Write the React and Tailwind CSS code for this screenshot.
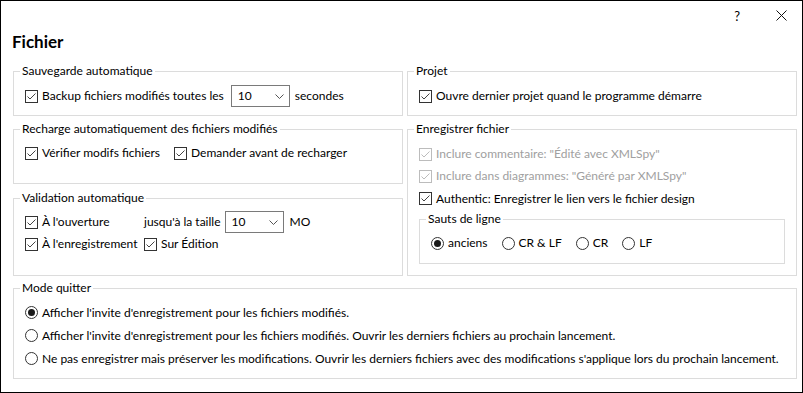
import React from "react";

const Check = ({ disabled = false }) => (
  <span
    className={`flex h-[13px] w-[13px] shrink-0 items-center justify-center border bg-white ${
      disabled ? "border-[#bcbcbc]" : "border-[#333333]"
    }`}
  >
    <svg width="11" height="11" viewBox="0 0 11 11">
      <path
        d="M1.5 5.5 L4 8 L9.5 2.5"
        fill="none"
        stroke={disabled ? "#bcbcbc" : "#444444"}
        strokeWidth="1"
      />
    </svg>
  </span>
);

const Radio = ({ checked = false }) => (
  <span className="flex h-[13px] w-[13px] shrink-0 items-center justify-center rounded-full border border-[#333333] bg-white">
    {checked && <span className="h-[7px] w-[7px] rounded-full bg-[#1a1a1a]" />}
  </span>
);

const CheckLabel = ({ children, disabled }) => (
  <label className="flex items-center gap-[4px]">
    <Check disabled={disabled} />
    <span className={disabled ? "text-[#a0a0a0]" : ""}>{children}</span>
  </label>
);

const RadioLabel = ({ children, checked }) => (
  <label className="flex items-center gap-[4px]">
    <Radio checked={checked} />
    <span>{children}</span>
  </label>
);

const Combo = ({ value }) => (
  <div className="flex h-[22px] w-[59px] shrink-0 items-center justify-between border border-[#7a7a7a] bg-white pl-[6px] pr-[5px]">
    <span>{value}</span>
    <svg width="9" height="5" viewBox="0 0 9 5">
      <path d="M0.5 0.5 L4.5 4.5 L8.5 0.5" fill="none" stroke="#555555" strokeWidth="1" />
    </svg>
  </div>
);

const Group = ({ title, className = "", children }) => (
  <fieldset className={`border border-[#dcdcdc] ${className}`}>
    <legend className="ml-[6px] px-[2px] leading-[16px]">{title}</legend>
    {children}
  </fieldset>
);

const App = () => {
  return (
    <div className="flex h-[393px] w-[803px] flex-col border border-black bg-white text-[12px] leading-[16px] text-black font-['Lato',sans-serif]">
      <div className="flex h-[29px] items-center justify-end pr-[15px]">
        <span className="mr-[36px] text-[13px]">?</span>
        <svg width="11" height="11" viewBox="0 0 11 11">
          <path d="M0.5 0.5 L10.5 10.5 M10.5 0.5 L0.5 10.5" stroke="#111111" strokeWidth="1" />
        </svg>
      </div>

      <h1 className="ml-[11px] h-[33px] text-[17px] font-bold leading-[24px]">Fichier</h1>

      <div className="grid grid-cols-[390px_390px] gap-x-[4px] pl-[12px]">
        <div className="flex flex-col">
          <Group title="Sauvegarde automatique" className="h-[53px]">
            <div className="mt-[6px] flex items-center pl-[11px]">
              <CheckLabel>Backup fichiers modifiés toutes les</CheckLabel>
              <div className="ml-[7px]">
                <Combo value="10" />
              </div>
              <span className="ml-[5px]">secondes</span>
            </div>
          </Group>

          <Group title="Recharge automatiquement des fichiers modifiés" className="mt-[5px] h-[63px]">
            <div className="mt-[8px] flex items-center gap-[14px] pl-[11px]">
              <CheckLabel>Vérifier modifs fichiers</CheckLabel>
              <CheckLabel>Demander avant de recharger</CheckLabel>
            </div>
          </Group>

          <Group title="Validation automatique" className="mt-[6px] h-[86px]">
            <div className="mt-[5px] grid grid-cols-[119px_auto] items-center gap-y-[3px] pl-[11px]">
              <CheckLabel>À l'ouverture</CheckLabel>
              <div className="flex items-center">
                <span className="mr-[4px]">jusqu'à la taille</span>
                <Combo value="10" />
                <span className="ml-[6px]">MO</span>
              </div>
              <CheckLabel>À l'enregistrement</CheckLabel>
              <CheckLabel>Sur Édition</CheckLabel>
            </div>
          </Group>
        </div>

        <div className="flex flex-col">
          <Group title="Projet" className="h-[53px]">
            <div className="mt-[6px] flex h-[22px] items-center pl-[11px]">
              <CheckLabel>Ouvre dernier projet quand le programme démarre</CheckLabel>
            </div>
          </Group>

          <Group title="Enregistrer fichier" className="mt-[5px] h-[155px]">
            <div className="mt-[6px] flex flex-col pl-[11px]">
              <div className="flex h-[22px] items-center">
                <CheckLabel disabled>Inclure commentaire: "Édité avec XMLSpy"</CheckLabel>
              </div>
              <div className="flex h-[22px] items-center">
                <CheckLabel disabled>Inclure dans diagrammes: "Généré par XMLSpy"</CheckLabel>
              </div>
              <div className="flex h-[23px] items-center">
                <CheckLabel>Authentic: Enregistrer le lien vers le fichier design</CheckLabel>
              </div>
            </div>
            <Group title="Sauts de ligne" className="mx-[11px] mt-[1px] h-[53px]">
              <div className="mt-[8px] flex items-center gap-[14px] pl-[11px]">
                <RadioLabel checked>anciens</RadioLabel>
                <RadioLabel>CR &amp; LF</RadioLabel>
                <RadioLabel>CR</RadioLabel>
                <RadioLabel>LF</RadioLabel>
              </div>
            </Group>
          </Group>
        </div>

        <Group title="Mode quitter" className="col-span-2 mt-[4px] h-[99px]">
          <div className="mt-[5px] flex flex-col pl-[11px]">
            <div className="flex h-[23px] items-center">
              <RadioLabel checked>Afficher l'invite d'enregistrement pour les fichiers modifiés.</RadioLabel>
            </div>
            <div className="flex h-[23px] items-center">
              <RadioLabel>
                Afficher l'invite d'enregistrement pour les fichiers modifiés. Ouvrir les derniers fichiers au prochain lancement.
              </RadioLabel>
            </div>
            <div className="flex h-[23px] items-center">
              <RadioLabel>
                Ne pas enregistrer mais préserver les modifications. Ouvrir les derniers fichiers avec des modifications s'applique lors du prochain lancement.
              </RadioLabel>
            </div>
          </div>
        </Group>
      </div>
    </div>
  );
};

export default App;
